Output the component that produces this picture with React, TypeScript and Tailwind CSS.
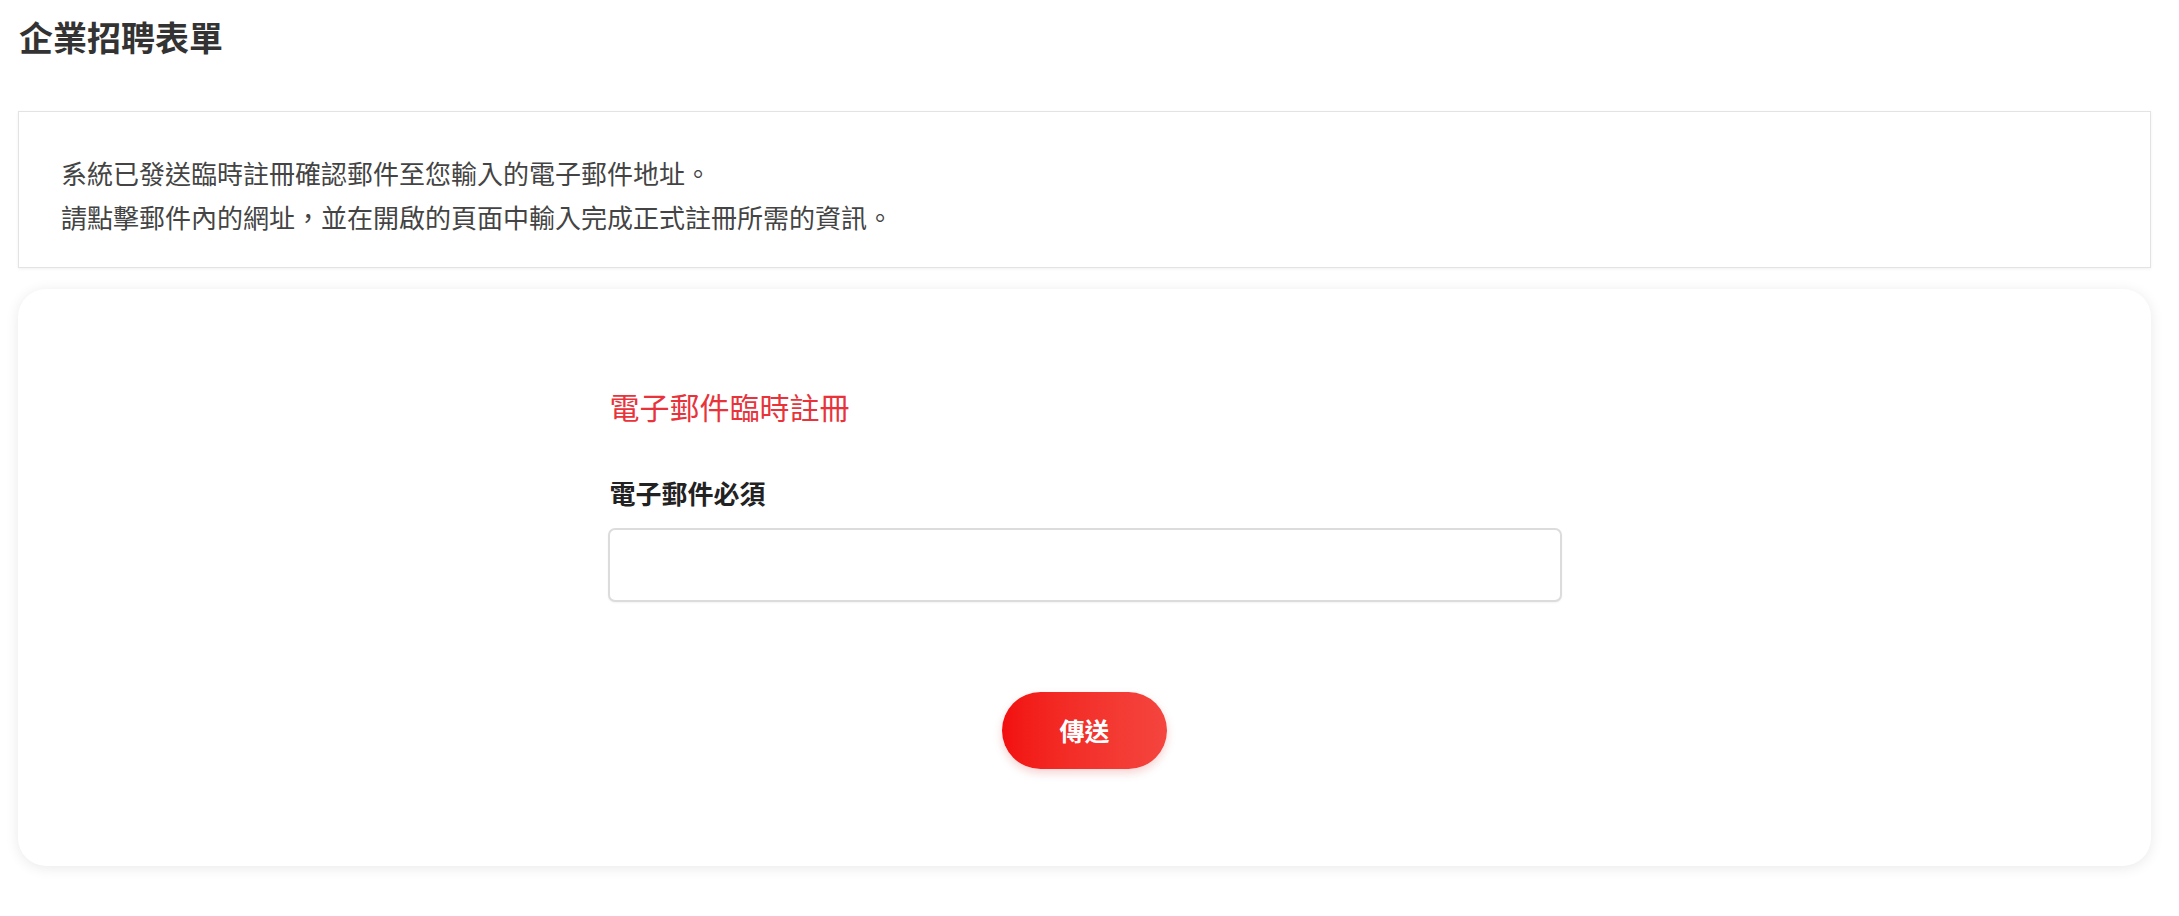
import React from "react";

export default function App() {
  return (
    <div className="min-h-screen bg-white font-['Noto_Sans_CJK_TC','Noto_Sans',sans-serif] text-[#333]">
      <div className="ml-[18px] mr-[28px] pb-[40px]">
        <h1 className="pt-[20px] text-[34px] leading-[33px] font-bold text-[#333] pl-[1px]">
          企業招聘表單
        </h1>

        <div className="mt-[58px] border border-[#e3e3e3] bg-white shadow-[0_1px_3px_rgba(0,0,0,0.06)] pl-[42px] pt-[39px] pb-[28px]">
          <p className="text-[26px] leading-[44px] text-[#444]">
            系統已發送臨時註冊確認郵件至您輸入的電子郵件地址。
          </p>
          <p className="text-[26px] leading-[44px] text-[#444]">
            請點擊郵件內的網址，並在開啟的頁面中輸入完成正式註冊所需的資訊。
          </p>
        </div>

        <div className="mt-[21px] h-[577px] rounded-[28px] bg-white shadow-[0_2px_14px_rgba(0,0,0,0.09)] pt-[102px] flex flex-col items-center">
          <div className="w-[954px] flex flex-col">
            <h2 className="pl-[2px] text-[30px] leading-[30px] text-[#e8333b]">
              電子郵件臨時註冊
            </h2>
            <label className="mt-[59px] pl-[2px] text-[26px] leading-[26px] font-bold text-[#222]">
              電子郵件必須
            </label>
            <input
              type="email"
              className="mt-[22px] h-[74px] w-full rounded-[7px] border-2 border-[#dcdcdc] bg-white px-4 text-[24px] outline-none shadow-[0_1px_2px_rgba(0,0,0,0.05)]"
            />
          </div>
          <button
            type="button"
            className="mt-[90px] h-[77px] w-[165px] rounded-full bg-linear-to-r from-[#f20e0e] to-[#f4453e] text-[25px] font-bold text-white shadow-[0_4px_10px_rgba(200,0,0,0.18)]"
          >
            傳送
          </button>
        </div>
      </div>
    </div>
  );
}
